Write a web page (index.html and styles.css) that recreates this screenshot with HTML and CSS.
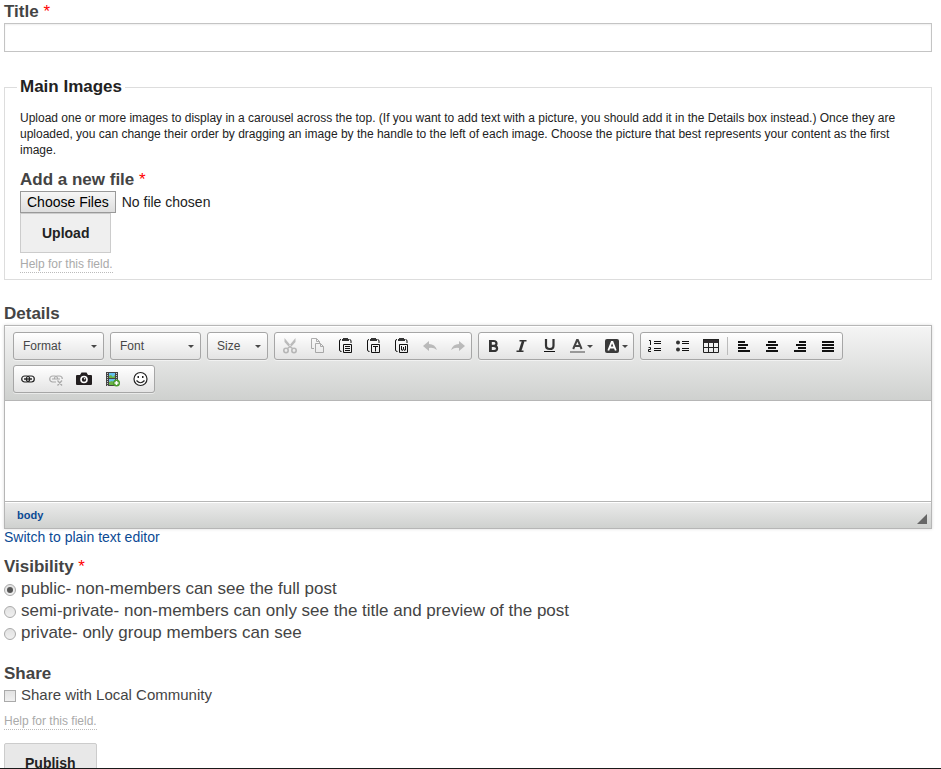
FILE: index.html
```html
<!DOCTYPE html>
<html lang="en">
<head>
<meta charset="utf-8">
<title>Create post</title>
<link rel="stylesheet" href="styles.css">
</head>
<body>
<form class="post-form">
  <div class="field">
    <label class="label" for="title">Title <span class="required">*</span></label>
    <input class="text-input" type="text" id="title">
  </div>

  <fieldset class="images">
    <legend>Main Images</legend>
    <p class="description">Upload one or more images to display in a carousel across the top. (If you want to add text with a picture, you should add it in the Details box instead.) Once they are uploaded, you can change their order by dragging an image by the handle to the left of each image. Choose the picture that best represents your content as the first image.</p>
    <label class="label" for="files">Add a new file <span class="required">*</span></label>
    <input class="file-input" type="file" id="files" multiple>
    <button class="upload" type="button">Upload</button>
    <a class="help" href="#">Help for this field.</a>
  </fieldset>

  <div class="details">
    <label class="label" for="details">Details</label>
    <div class="editor">
      <div class="toolbar">
        <span class="combo"><select aria-label="Format"><option>Format</option></select></span>
        <span class="combo"><select aria-label="Font"><option>Font</option></select></span>
        <span class="combo combo-small"><select aria-label="Size"><option>Size</option></select></span>
        <div class="group">
          <button type="button" class="tool off" aria-label="Cut"><svg viewBox="0 0 16 16"><path d="M2.500 0v4l5 5.500 2-1zM13.500 0v4l-5 5.500-2-1z" fill="#777"/><g fill="none" stroke="#777" stroke-width="1.600"><circle cx="4" cy="12.500" r="2.200"/><circle cx="12" cy="12.500" r="2.200"/><path d="M5.500 10.500L8 8.500l2.500 2"/></g></svg></button>
          <button type="button" class="tool off" aria-label="Copy"><svg viewBox="0 0 16 16" fill="none" stroke="#555"><path d="M4 10.500H1.500V.5h5l3 3V5M6.500.5v3h3"/><path d="M5.500 5.500h5l3 3v6h-8zM10.500 5.500v3h3"/></svg></button>
          <button type="button" class="tool" aria-label="Paste"><svg viewBox="0 0 16 16"><path d="M4 1h1V0h5v1h1v2H4z" fill="#333"/><g fill="none" stroke="#111"><path d="M3 1.500q-1.500 0-1.500 1.500v9q0 1.500 2 1.500M11.500 1.500q1.500 0 1.500 1.500v2"/><path d="M5.500 6.500h8v8h-8zM7 8.500h5M7 10.500h5M7 12.500h5"/></g></svg></button>
          <button type="button" class="tool" aria-label="Paste as plain text"><svg viewBox="0 0 16 16"><path d="M4 1h1V0h5v1h1v2H4z" fill="#333"/><g fill="none" stroke="#111"><path d="M3 1.500q-1.500 0-1.500 1.500v9q0 1.500 2 1.500M11.500 1.500q1.500 0 1.500 1.500v2"/><path d="M5.500 6.500h8v8h-8zM7 8.500h5M9.500 8.500v5"/></g></svg></button>
          <button type="button" class="tool" aria-label="Paste from Word"><svg viewBox="0 0 16 16"><path d="M4 1h1V0h5v1h1v2H4z" fill="#333"/><g fill="none" stroke="#111"><path d="M3 1.500q-1.500 0-1.500 1.500v9q0 1.500 2 1.500M11.500 1.500q1.500 0 1.500 1.500v2"/><path d="M5.500 6.500h8v8h-8zM7.500 8v4l1 .5 1-2 1 2 1-.5V8M9.500 9v2"/></g></svg></button>
          <button type="button" class="tool off" aria-label="Undo"><svg viewBox="0 0 16 16"><path d="M1 8l6-5v3q6 0 8 6-4-3-8-2v3z" fill="#777"/></svg></button>
          <button type="button" class="tool off" aria-label="Redo"><svg viewBox="0 0 16 16"><path d="M15 8L9 3v3q-6 0-8 6 4-3 8-2v3z" fill="#777"/></svg></button>
        </div>
        <div class="group">
          <button type="button" class="tool" aria-label="Bold"><svg viewBox="0 0 16 16"><path d="M4 3h3.500q3 0 3 2.400t-3 2.400H4M7.500 7.800q3.600 0 3.600 2.600T7.500 13H4" fill="none" stroke="#333" stroke-width="2.200"/><path d="M3 2h2.800v12H3z" fill="#333"/></svg></button>
          <button type="button" class="tool" aria-label="Italic"><svg viewBox="0 0 16 16"><path d="M5.500 2.800h7M2.500 13.200h7" stroke="#333" stroke-width="1.600"/><path d="M9.200 3l-3.200 10" stroke="#333" stroke-width="2.600"/></svg></button>
          <button type="button" class="tool" aria-label="Underline"><svg viewBox="0 0 16 16"><path d="M4 1v6.500q0 3.500 3.800 3.500t3.700-3.500V1" fill="none" stroke="#333" stroke-width="2.200"/><path d="M2 13.500h11" stroke="#111"/></svg></button>
          <button type="button" class="tool tool-menu" aria-label="Text color"><svg viewBox="0 0 16 16"><path d="M3.200 11L7 2h.8l3.800 9M5 8h5" fill="none" stroke="#444" stroke-width="2"/><path d="M0 13h15v2H0z" fill="#999"/></svg></button>
          <button type="button" class="tool tool-menu" aria-label="Background color"><svg viewBox="0 0 16 16"><rect x="0" y="1" width="14" height="14" rx="2" fill="#3a3a3a"/><path d="M3.300 12.500L6.700 4h.8l3.300 8.500M4.500 9.500h5" fill="none" stroke="#fff" stroke-width="1.800"/></svg></button>
        </div>
        <div class="group">
          <button type="button" class="tool" aria-label="Numbered list"><svg viewBox="0 0 16 16" fill="none" stroke="#111"><path d="M1 2.500h1.500V7M.5 9.500h2v2h-2v2H3M6 3.500h7M6 5.500h7M6 10.500h7M6 12.500h7"/></svg></button>
          <button type="button" class="tool" aria-label="Bulleted list"><svg viewBox="0 0 16 16"><circle cx="2" cy="4.500" r="2" fill="#333"/><circle cx="2" cy="11.500" r="2" fill="#333"/><path d="M6 3.500h7M6 5.500h7M6 10.500h7M6 12.500h7" stroke="#111"/></svg></button>
          <button type="button" class="tool" aria-label="Table"><svg viewBox="0 0 16 16"><path d="M0 1h16v4H0z" fill="#302c2e"/><path d="M.5 1.500h15v13H.5zM5.500 5v9M10.500 5v9M1 9.500h14" fill="none" stroke="#222"/></svg></button>
          <span class="separator"></span>
          <button type="button" class="tool" aria-label="Align left"><svg viewBox="0 0 16 16"><path d="M1 3h7v2H1zM1 6h10v2H1zM1 9h8v2H1zM1 12h12v2H1z" fill="#111"/></svg></button>
          <button type="button" class="tool" aria-label="Center"><svg viewBox="0 0 16 16"><path d="M3 3h8v2H3zM1 6h12v2H1zM3 9h8v2H3zM1 12h12v2H1z" fill="#111"/></svg></button>
          <button type="button" class="tool" aria-label="Align right"><svg viewBox="0 0 16 16"><path d="M6 3h7v2H6zM3 6h10v2H3zM5 9h8v2H5zM1 12h12v2H1z" fill="#111"/></svg></button>
          <button type="button" class="tool" aria-label="Justify"><svg viewBox="0 0 16 16"><path d="M1 3h12v2H1zM1 6h12v2H1zM1 9h12v2H1zM1 12h12v2H1z" fill="#111"/></svg></button>
        </div>
        <div class="group">
          <button type="button" class="tool" aria-label="Link"><svg viewBox="0 0 16 16" fill="none" stroke="#222" stroke-width="1.200"><rect x=".7" y="5" width="8" height="6" rx="3"/><rect x="5.300" y="5" width="8" height="6" rx="3"/><path d="M3 8h8" stroke-width="1.400"/></svg></button>
          <button type="button" class="tool off" aria-label="Unlink"><svg viewBox="0 0 16 16" fill="none" stroke="#555" stroke-width="1.200"><path d="M7 11H3.700a3 3 0 010-6h2a3 3 0 013 3M5.300 8a3 3 0 013-3h2a3 3 0 013 3M3 8h8M8.500 9.500l4.500 5M13 9.500l-4.500 5"/></svg></button>
          <button type="button" class="tool" aria-label="Image"><svg viewBox="0 0 16 16"><path d="M1 4h3l1.500-2.500h5L12 4h3q1 0 1 1v8q0 1-1 1H1q-1 0-1-1V5q0-1 1-1z" fill="#231f20"/><circle cx="8" cy="8.500" r="3" fill="#231f20" stroke="#fff" stroke-width="1.600"/><circle cx="8.600" cy="7.800" r=".8" fill="#fff"/></svg></button>
          <button type="button" class="tool" aria-label="Media"><svg viewBox="0 0 16 16"><path d="M1 1h12v14H1z" fill="#444"/><path d="M4 2h6v5H4zM4 8h6v6H4z" fill="#63c0ef"/><path d="M4 7V5l2-1 2 2 2-2v3zM4 14v-3l3-1 3 2v2z" fill="#68b344"/><path d="M2.500 2v13M11.500 2v12" stroke="#ccc" stroke-dasharray="1 1"/><circle cx="11.500" cy="12" r="3.500" fill="#4b9c2b"/><path d="M9.500 12h4M11.500 10v4" stroke="#fff" stroke-width="1.600"/></svg></button>
          <button type="button" class="tool" aria-label="Smiley"><svg viewBox="0 0 16 16"><circle cx="7.500" cy="8" r="6.500" fill="#fff" stroke="#222" stroke-width="1.200"/><path d="M4.500 5H6v2H4.500zM9 5h1.500v2H9z" fill="#222"/><path d="M3.500 9.500q4 4.500 8 0" fill="none" stroke="#222" stroke-width="1.200"/></svg></button>
        </div>
      </div>
      <textarea class="content" id="details"></textarea>
      <div class="status"><a href="#">body</a><svg class="grip" viewBox="0 0 10 10"><path d="M10 0v10H0z" fill="#666"/></svg></div>
    </div>
    <a class="switch" href="#">Switch to plain text editor</a>
  </div>

  <div class="visibility" role="radiogroup" aria-labelledby="vis">
    <span class="label" id="vis">Visibility <span class="required">*</span></span>
    <label class="choice"><input type="radio" name="v" checked>public- non-members can see the full post</label>
    <label class="choice"><input type="radio" name="v">semi-private- non-members can only see the title and preview of the post</label>
    <label class="choice"><input type="radio" name="v">private- only group members can see</label>
  </div>

  <div class="share" role="group" aria-labelledby="share">
    <span class="label" id="share">Share</span>
    <label class="choice choice-small"><input type="checkbox">Share with Local Community</label>
    <a class="help" href="#">Help for this field.</a>
  </div>

  <button class="publish" type="submit">Publish</button>
</form>
</body>
</html>
```
FILE: styles.css
```css
* { box-sizing: border-box; }

body {
  margin: 0;
  height: 100vh;
  overflow: hidden;
  border-bottom: 1px solid #1a1a1a;
  background: #fff;
  color: #222;
  font-family: "Liberation Sans", Arial, sans-serif;
}

button, input, select, textarea { font: inherit; color: inherit; margin: 0; }
a { color: #0b4a94; text-decoration: none; }

.post-form { padding: 1px 9px 0 4px; }

.label {
  display: block;
  color: #444;
  font-size: 17px;
  font-weight: bold;
  line-height: 22px;
}
.required { color: #f00; font-weight: normal; }

.text-input {
  display: block;
  width: 100%;
  height: 29px;
  padding: 0 6px;
  border: 1px solid #c4c4c4;
  box-shadow: inset 0 1px 2px #eee;
  font-size: 14px;
}

.images {
  margin: 24px 0 0;
  padding: 0 15px 6px;
  border: 1px solid #ddd;
}
.images legend {
  margin-left: -3px;
  padding: 0 3px;
  font-size: 17px;
  font-weight: bold;
  line-height: 22px;
}
.description {
  margin: 12px 0 11px;
  font-size: 12px;
  line-height: 16px;
}
.file-input {
  display: block;
  height: 22px;
  font-size: 14px;
  line-height: 20px;
}
.file-input::file-selector-button {
  height: 22px;
  margin: 0 6px 0 0;
  padding: 0 6px;
  border: 1px solid #999;
  border-radius: 0;
  background: linear-gradient(#f6f6f6, #dedede);
  color: #000;
  font: inherit;
}
.upload {
  display: block;
  padding: 1px 21px 0;
  border: 1px solid #ccc;
  background: #efefef;
  font-size: 14px;
  font-weight: bold;
  line-height: 37px;
}
.help {
  display: table;
  margin-top: 4px;
  border-bottom: 1px dotted #bbb;
  color: #aaa;
  font-size: 12px;
  line-height: 15px;
}

.details { margin-top: 23px; }
.editor {
  border: 1px solid #b6b6b6;
  box-shadow: 0 0 3px rgba(0, 0, 0, .15);
}
.toolbar {
  display: flex;
  flex-wrap: wrap;
  gap: 5px 6px;
  padding: 6px 8px 7px;
  border-bottom: 1px solid #b6b6b6;
  box-shadow: inset 0 1px #fff;
  background: linear-gradient(#f5f5f5, #cfd1cf);
}
.combo { position: relative; width: 91px; }
.combo-small { width: 61px; }
.combo select {
  width: 100%;
  height: 28px;
  padding: 0 9px;
  appearance: none;
  color: #474747;
  font-size: 12px;
}
.combo select, .group {
  border: 1px solid #a6a6a6;
  border-radius: 3px;
  background: linear-gradient(#fff, #e4e4e4);
  box-shadow: 0 1px rgba(255, 255, 255, .5);
}
.combo::after, .tool-menu::after {
  content: "";
  border: 3px solid transparent;
  border-top-color: #474747;
  border-bottom-width: 0;
}
.combo::after {
  position: absolute;
  right: 7px;
  top: 13px;
  pointer-events: none;
}
.group { display: flex; align-items: center; height: 28px; }
.tool {
  display: flex;
  align-items: center;
  gap: 1px;
  padding: 0 5px 0 7px;
  border: 0;
  background: none;
}
.tool[aria-label="Table"], .tool[aria-label="Image"] { padding: 0 6px; }
.tool svg { width: 16px; height: 16px; }
.off { opacity: .45; }
.separator { width: 1px; height: 18px; margin: 0 2px; background: #bbb; }
.content {
  display: block;
  width: 100%;
  height: 100px;
  padding: 10px;
  border: 0;
  resize: none;
}
.status {
  display: flex;
  align-items: center;
  justify-content: space-between;
  padding: 0 4px 0 12px;
  border-top: 1px solid #b6b6b6;
  box-shadow: inset 0 1px #fff;
  background: linear-gradient(#ebebeb, #cfd1cf);
  font-size: 11px;
  font-weight: bold;
  line-height: 26px;
}
.grip { align-self: flex-end; width: 10px; height: 10px; margin-bottom: 4px; }
.switch { display: table; font-size: 14px; line-height: 16px; }

.visibility { margin-top: 11px; }
.choice {
  display: flex;
  align-items: center;
  gap: 5px;
  color: #444;
  font-size: 17px;
  line-height: 22px;
}
.choice-small { font-size: 15px; line-height: 20px; }
.choice input {
  display: grid;
  place-items: center;
  width: 12px;
  height: 12px;
  margin-top: 2px;
  appearance: none;
  border: 1px solid #aaa;
  background: linear-gradient(#e2e2e2, #f0f0f0);
}
.choice input[type="radio"] { border-radius: 50%; }
.choice input:checked::before {
  content: "";
  width: 6px;
  height: 6px;
  border-radius: 50%;
  background: #555;
}

.share { margin-top: 19px; }
.share .help { margin-top: 9px; }

.publish {
  margin-top: 13px;
  padding: 0 20px;
  border: 1px solid #ccc;
  border-radius: 2px;
  background: #e8e8e8;
  font-size: 14px;
  font-weight: bold;
  line-height: 38px;
}
```
